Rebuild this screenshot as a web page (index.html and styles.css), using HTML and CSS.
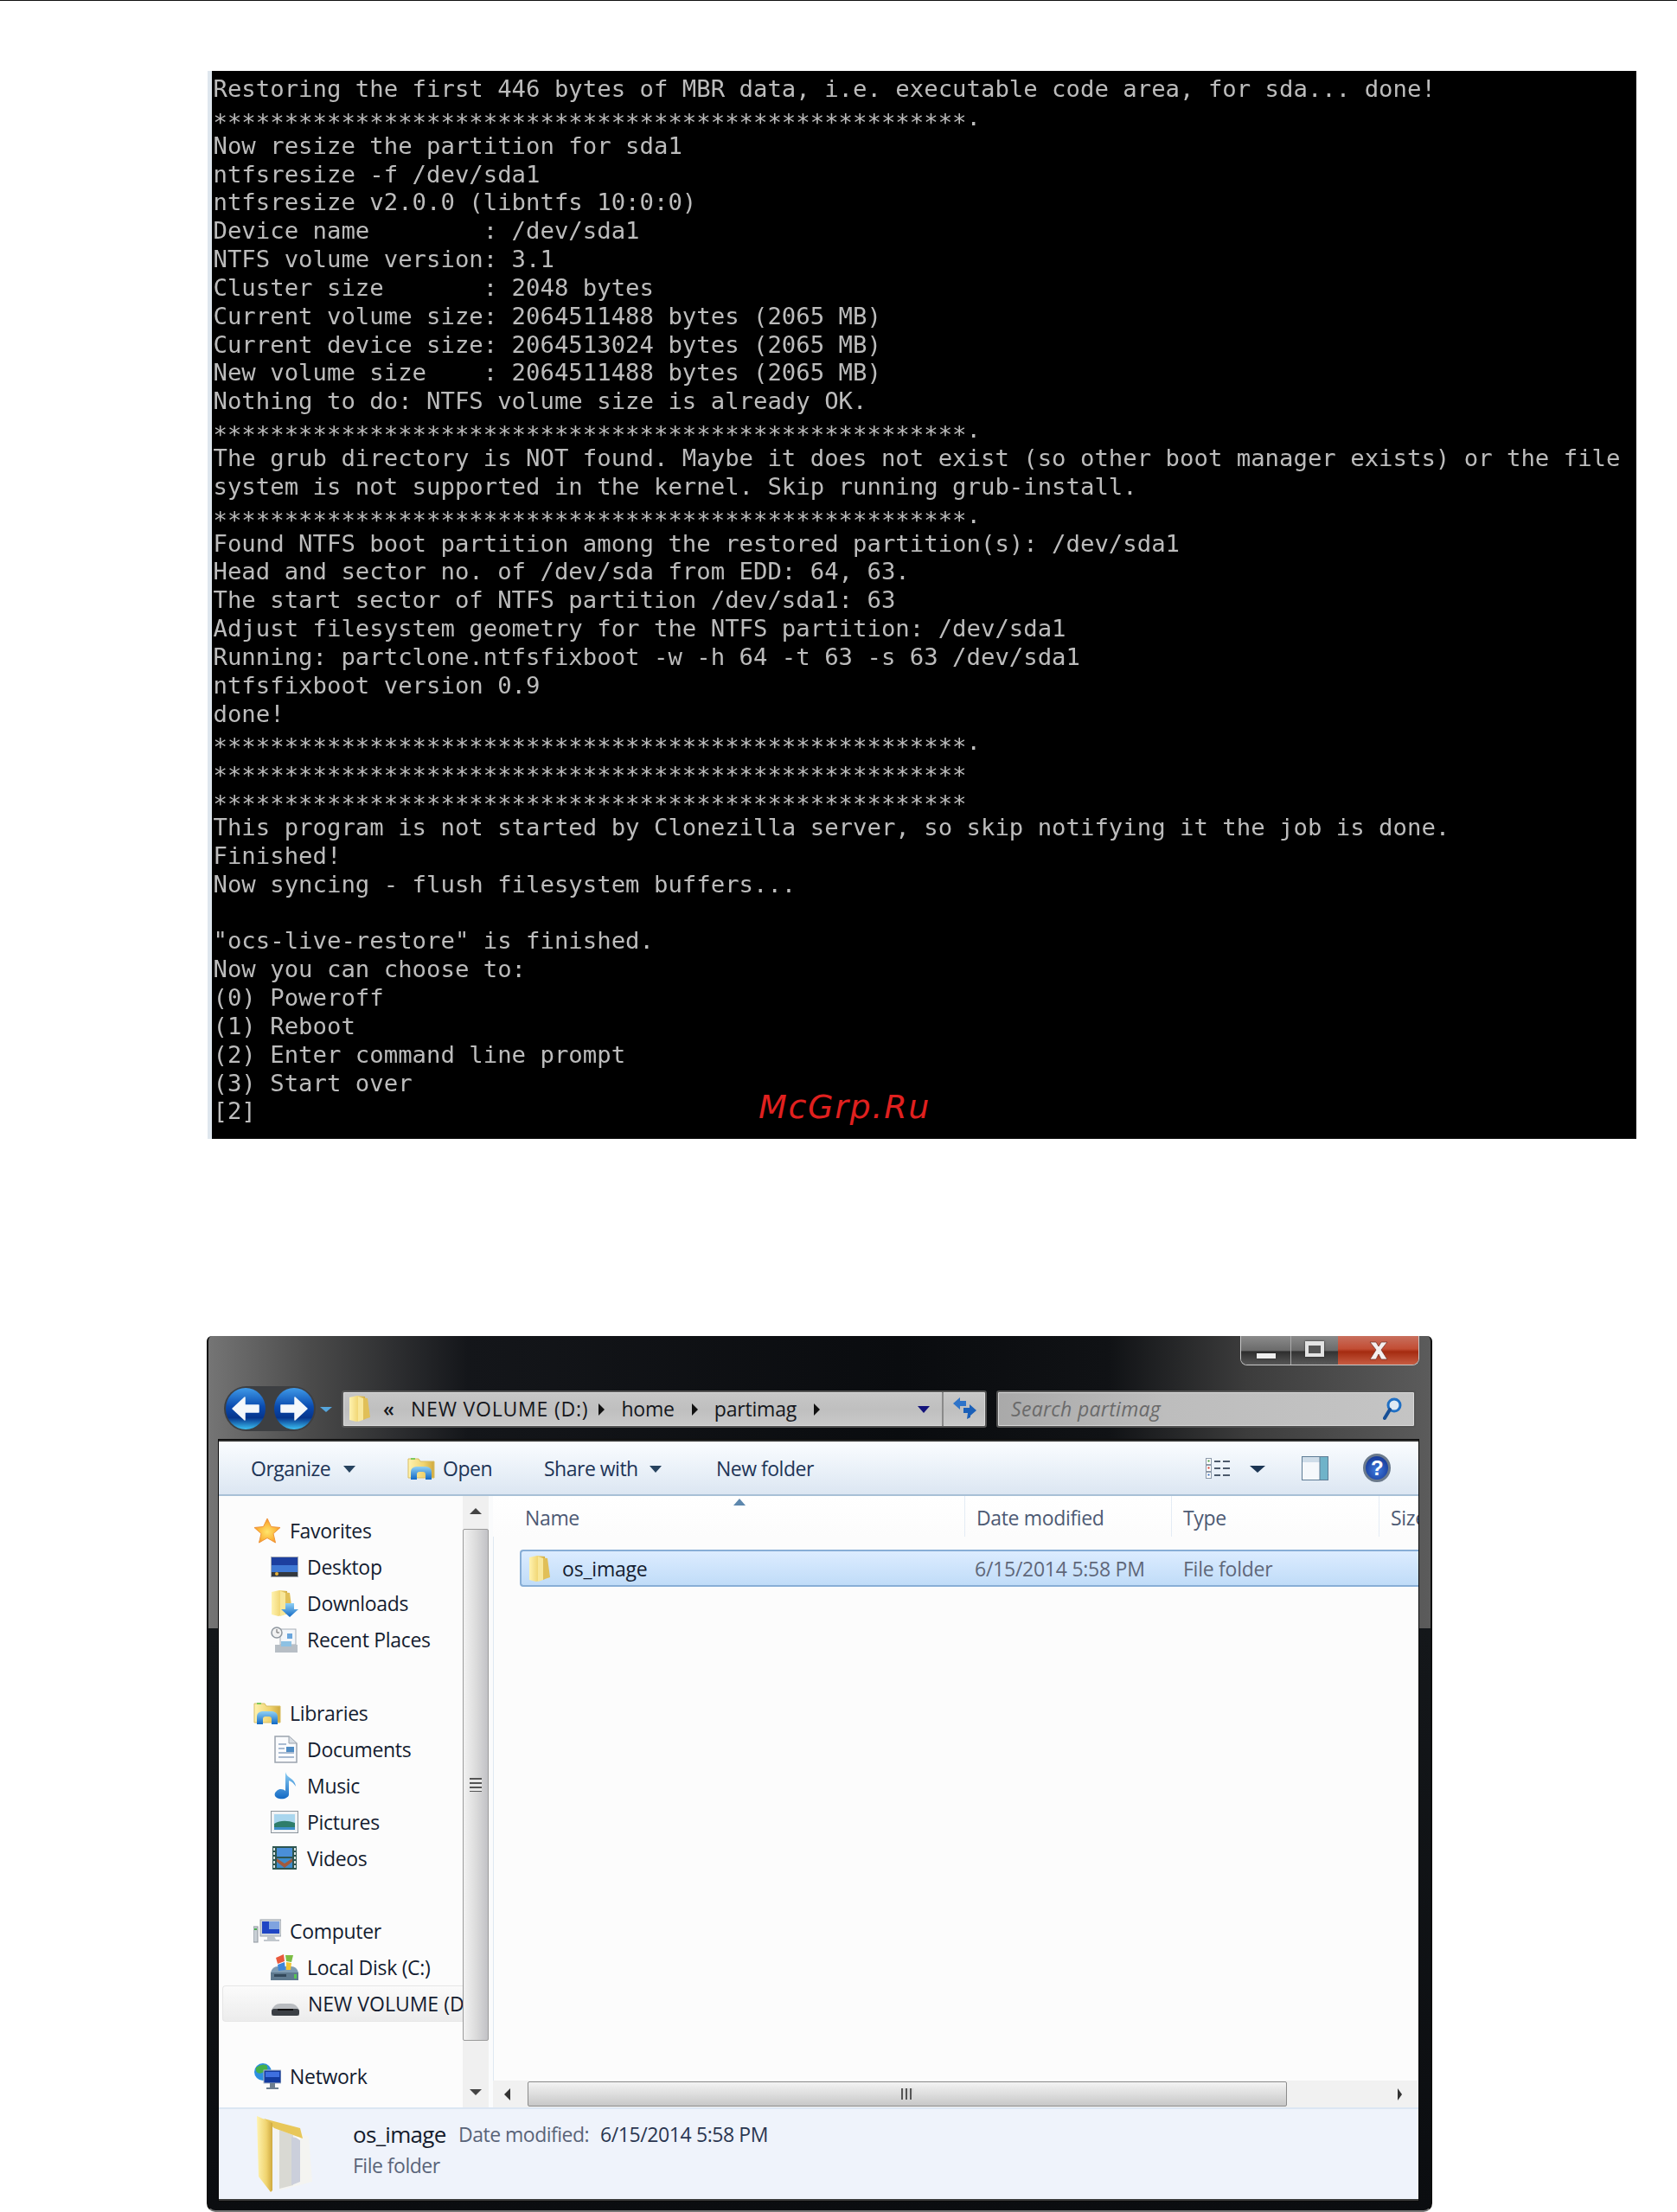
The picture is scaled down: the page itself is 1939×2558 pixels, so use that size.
FILE: index.html
```html
<!DOCTYPE html>
<html lang="en">
<head>
<meta charset="utf-8">
<title>Clonezilla restore</title>
<link rel="stylesheet" href="styles.css">
</head>
<body>
<svg class="defs" aria-hidden="true">
  <defs>
    <linearGradient id="gFolder" x1="0" y1="0" x2="1" y2="0"><stop offset="0" stop-color="#fff3b0"/><stop offset=".6" stop-color="#f0d470"/><stop offset="1" stop-color="#cfa93e"/></linearGradient>
    <linearGradient id="gBlue" x1="0" y1="0" x2="0" y2="1"><stop offset="0" stop-color="#8fd0f5"/><stop offset="1" stop-color="#1269c4"/></linearGradient>
    <radialGradient id="gStar" cx=".5" cy=".55" r=".6"><stop offset="0" stop-color="#ffe56b"/><stop offset=".6" stop-color="#fbb53a"/><stop offset="1" stop-color="#ec7d1e"/></radialGradient>
    <linearGradient id="gNav" x1="0" y1="0" x2="0" y2="1"><stop offset="0" stop-color="#3f9ae8"/><stop offset=".45" stop-color="#0a4bb0"/><stop offset=".72" stop-color="#05348c"/><stop offset="1" stop-color="#3cc0f2"/></linearGradient>
    <symbol id="iFolder" viewBox="0 0 26 32"><path d="M1 3 L10 1 L19 2 L19 28 L9 31 L1 29 Z" fill="url(#gFolder)"/><path d="M13 3 L22 4 L25 26 L16 29 Z" fill="#e0bf58"/><path d="M11 2 L17 4 L17 29 L11 31 Z" fill="#f8e79a"/></symbol>
    <symbol id="iStar" viewBox="0 0 32 30"><path d="M16 1 L20.5 10.5 L31 11.5 L23 18.5 L25.5 29 L16 23.5 L6.500 29 L9 18.500 L1 11.500 L11.500 10.500 Z" fill="url(#gStar)" stroke="#f0953a" stroke-width="1"/></symbol>
    <symbol id="iDesktop" viewBox="0 0 32 24"><rect x="0" y="0" width="32" height="24" fill="#a7adb6"/><rect x="1" y="1" width="30" height="17" fill="#3f78d4"/><rect x="1" y="1" width="30" height="9" fill="#1d3f9f"/><rect x="1" y="18" width="30" height="5" fill="#33383e"/><circle cx="7" cy="20" r="2" fill="#e8b23a"/></symbol>
    <symbol id="iLibrary" viewBox="0 0 32 28"><path d="M1 3 h12 l2 3 h16 v19 H1 Z" fill="url(#gFolder)" stroke="#d8bd62"/><rect x="4" y="2" width="5" height="2" fill="#7fc95c"/><path d="M4 27 v-9 q0-5 6-6 h12 q6 1 6 6 v9 h-7 v-6 q0-3-3-3 h-4 q-3 0-3 3 v6 Z" fill="url(#gBlue)"/></symbol>
  </defs>
</svg>
<main class="page">
  <section class="terminal">
<pre class="term-text">Restoring the first 446 bytes of MBR data, i.e. executable code area, for sda... done!
<span class="stars">*****************************************************</span>.
Now resize the partition for sda1
ntfsresize -f /dev/sda1
ntfsresize v2.0.0 (libntfs 10:0:0)
Device name        : /dev/sda1
NTFS volume version: 3.1
Cluster size       : 2048 bytes
Current volume size: 2064511488 bytes (2065 MB)
Current device size: 2064513024 bytes (2065 MB)
New volume size    : 2064511488 bytes (2065 MB)
Nothing to do: NTFS volume size is already OK.
<span class="stars">*****************************************************</span>.
The grub directory is NOT found. Maybe it does not exist (so other boot manager exists) or the file
system is not supported in the kernel. Skip running grub-install.
<span class="stars">*****************************************************</span>.
Found NTFS boot partition among the restored partition(s): /dev/sda1
Head and sector no. of /dev/sda from EDD: 64, 63.
The start sector of NTFS partition /dev/sda1: 63
Adjust filesystem geometry for the NTFS partition: /dev/sda1
Running: partclone.ntfsfixboot -w -h 64 -t 63 -s 63 /dev/sda1
ntfsfixboot version 0.9
done!
<span class="stars">*****************************************************</span>.
<span class="stars">*****************************************************</span>
<span class="stars">*****************************************************</span>
This program is not started by Clonezilla server, so skip notifying it the job is done.
Finished!
Now syncing - flush filesystem buffers...

"ocs-live-restore" is finished.
Now you can choose to:
(0) Poweroff
(1) Reboot
(2) Enter command line prompt
(3) Start over
[2]</pre>
    <div class="watermark">McGrp.Ru</div>
  </section>

  <section class="window">
    <header class="chrome">
      <div class="caption">
        <div class="winbtns">
          <div class="wb wb-min"><span class="min-bar"></span></div>
          <div class="wb wb-max"><span class="max-box"></span></div>
          <div class="wb wb-close"><svg width="30" height="24" viewBox="0 0 30 24"><path d="M5 2 h7 l3 5 l3-5 h7 l-7 9 l7 11 h-7 l-3-6 l-3 6 h-7 l7-11 Z" fill="#f4efee" stroke="#6b2a20" stroke-width=".7"/></svg></div>
        </div>
      </div>
      <div class="navrow">
        <div class="navbtns">
          <div class="nav-halo">
            <svg class="navbtn" width="46" height="48" viewBox="0 0 46 48"><ellipse cx="23" cy="24" rx="23" ry="24" fill="url(#gNav)"/><path d="M38 20 H22 V11 L8 24 L22 37 V28 H38 Z" fill="#f4f7fb" stroke="#f4f7fb" stroke-width="1.500" stroke-linejoin="round"/></svg>
            <svg class="navbtn" width="46" height="48" viewBox="0 0 46 48"><ellipse cx="23" cy="24" rx="23" ry="24" fill="url(#gNav)"/><path d="M8 20 H24 V11 L38 24 L24 37 V28 H8 Z" fill="#f4f7fb" stroke="#f4f7fb" stroke-width="1.500" stroke-linejoin="round"/></svg>
          </div>
          <span class="tri tri-nav"></span>
        </div>
        <div class="address">
          <div class="crumbs">
            <svg class="addr-folder" width="26" height="32"><use href="#iFolder"/></svg>
            <span class="raquo">«</span>
            <span class="crumb crumb-vol">NEW VOLUME (D:)</span><span class="tri tri-right tri-first"></span>
            <span class="crumb">home</span><span class="tri tri-right"></span>
            <span class="crumb">partimag</span><span class="tri tri-right"></span>
          </div>
          <span class="tri tri-addr"></span>
          <div class="refresh">
            <svg width="29" height="28" viewBox="0 0 29 28"><path d="M1 8 L9 1 V5 H16 V11 H9 V15 Z" fill="#2f74c9"/><path d="M28 16 L20 9 V13 H13 V19 H18 L17 26 L21 24 L21 22 Z" fill="#1a5fb8"/></svg>
          </div>
        </div>
        <div class="search">
          <span class="search-text">Search partimag</span>
          <svg width="22" height="28" viewBox="0 0 22 28"><circle cx="13" cy="10" r="7" fill="#dfe9f3" stroke="#1f6fc4" stroke-width="3"/><path d="M8 15 L2 25" stroke="#174f96" stroke-width="4" stroke-linecap="round"/></svg>
        </div>
      </div>
    </header>

    <div class="panel">
      <div class="toolbar">
        <div class="tb-item tb-organize"><span>Organize</span><span class="tri tri-tool"></span></div>
        <div class="tb-item tb-open">
          <svg width="32" height="28"><use href="#iLibrary"/></svg><span>Open</span>
        </div>
        <div class="tb-item tb-share"><span>Share with</span><span class="tri tri-tool"></span></div>
        <div class="tb-item tb-new"><span>New folder</span></div>
        <div class="tb-right">
          <svg class="tb-views" width="29" height="24" viewBox="0 0 29 24"><g fill="#fff" stroke="#8b98a8"><rect x=".5" y=".5" width="6" height="7"/><rect x=".5" y="8.500" width="6" height="7"/><rect x=".5" y="16.500" width="6" height="7"/></g><rect x="2.500" y="10.500" width="2" height="2" fill="#d23a2a"/><rect x="2.500" y="2.500" width="2" height="2" fill="#4a9a44"/><rect x="2.500" y="18.500" width="2" height="2" fill="#3c72c0"/><path d="M10 4 h7 M20 4 h8 M10 12 h7 M20 12 h8 M10 20 h7 M20 20 h8" stroke="#4c5a6c" stroke-width="2"/></svg>
          <span class="tri tri-views"></span>
          <svg class="tb-pane" width="31" height="28" viewBox="0 0 31 28"><rect x=".5" y=".5" width="30" height="27" fill="#f5f8fb" stroke="#5e7c95"/><rect x="1" y="1" width="20" height="6" fill="#cfdde9"/><rect x="21" y="1" width="9" height="26" fill="#70b3c9"/><path d="M21 1 V27" stroke="#5e7c95"/></svg>
          <div class="tb-help">?</div>
        </div>
      </div>

      <div class="content">
        <nav class="sidebar">
          <div class="tree">
            <div class="node root"><svg class="ic" width="32" height="30"><use href="#iStar"/></svg>Favorites</div>
            <div class="node leaf"><svg class="ic" width="32" height="24"><use href="#iDesktop"/></svg>Desktop</div>
            <div class="node leaf"><svg class="ic" width="32" height="32" viewBox="0 0 32 32"><use href="#iFolder" width="26" height="32"/><path d="M17 16 h10 v7 h5 l-10 9 l-10-9 h5 Z" fill="url(#gBlue)"/></svg>Downloads</div>
            <div class="node leaf"><svg class="ic" width="32" height="31" viewBox="0 0 32 31"><rect x="11" y="3" width="18" height="18" fill="#f4f7fa" stroke="#a6adb5"/><rect x="19" y="8" width="6" height="6" fill="#6aa6dd"/><circle cx="7" cy="7" r="6" fill="#f2f2f2" stroke="#8f979f" stroke-width="1.500"/><path d="M7 3 V7 H10" fill="none" stroke="#666" stroke-width="1"/><path d="M5 21 H31 V30 H5 Z" fill="#b7bec5"/><rect x="12" y="17" width="12" height="6" fill="#8dc1e3"/></svg>Recent Places</div>
            <div class="spacer"></div>
            <div class="node root"><svg class="ic" width="32" height="28"><use href="#iLibrary"/></svg>Libraries</div>
            <div class="node leaf"><svg class="ic" width="32" height="32" viewBox="0 0 32 32"><path d="M5 1 H21 L30 9 V31 H5 Z" fill="#fafbfd" stroke="#9aa3ad" stroke-width="1.500"/><path d="M21 1 V9 H30" fill="#d8dde3" stroke="#9aa3ad"/><path d="M9 10 h9 M9 15 h7 M9 20 h18 M9 25 h18" stroke="#8fa6c4" stroke-width="1.500"/><rect x="18" y="13" width="9" height="6" fill="#4f8cc4"/></svg>Documents</div>
            <div class="node leaf"><svg class="ic" width="32" height="33" viewBox="0 0 32 33"><path d="M17 1 C19 9 28 8 29 18 C26 13 23 12 21 11 L21 27 C21 31 15 33 10 32 C4 31 3 26 7 23 C10 20 15 21 17 23 Z" fill="url(#gBlue)"/></svg>Music</div>
            <div class="node leaf"><svg class="ic" width="32" height="26" viewBox="0 0 32 26"><rect x=".5" y=".5" width="31" height="25" fill="#f1f3f5" stroke="#8d959d"/><rect x="4" y="4" width="24" height="18" fill="#a9d6ee"/><path d="M4 15 Q14 9 28 14 V22 H4 Z" fill="#2e7d6a"/><rect x="4" y="19" width="24" height="3" fill="#3f8fc9"/></svg>Pictures</div>
            <div class="node leaf"><svg class="ic" width="32" height="27" viewBox="0 0 32 27"><rect x="2" width="28" height="27" fill="#2d5550"/><rect x="7" y="2" width="18" height="10" fill="#4a8fd8"/><rect x="7" y="14" width="18" height="11" fill="#3b8ccc"/><path d="M7 14 L16 20 L25 14 V18 L16 25 L7 18 Z" fill="#a25a3c"/><path d="M4 2 V25 M28 2 V25" stroke="#dfe7e6" stroke-width="2" stroke-dasharray="3 2"/></svg>Videos</div>
            <div class="spacer"></div>
            <div class="node root"><svg class="ic" width="32" height="28" viewBox="0 0 32 28"><rect x="8" y="1" width="24" height="19" fill="#cfd5db" stroke="#9aa2aa"/><rect x="10" y="3" width="20" height="14" fill="#1f45c4"/><rect x="18" y="3" width="12" height="9" fill="#7fa3df"/><path d="M16 20 h8 l2 4 h4 v2 h-18 v-2 h4 Z" fill="#c1c7cd"/><rect x="0" y="9" width="5" height="18" fill="#c9cfd5" stroke="#8d959d"/><rect x="1" y="11" width="3" height="2" fill="#4caf50"/></svg>Computer</div>
            <div class="node leaf"><svg class="ic" width="32" height="32" viewBox="0 0 32 32"><path d="M0 22 Q2 15 8 15 H24 Q30 15 32 22 V31 H0 Z" fill="#7f9cb3"/><rect x="0" y="22" width="32" height="9" fill="#5f7a8f"/><rect x="4" y="24" width="14" height="3" fill="#33485a"/><rect x="27" y="24" width="3" height="5" fill="#58c455"/><path d="M6 5 L15 1 L16 9 L8 12 Z" fill="#e9593c"/><path d="M17 2 L26 2 L24 10 L18 9 Z" fill="#7cbd44"/><path d="M8 13 L16 10 L17 19 L9 20 Z" fill="#3e86d8"/><path d="M18 10 L24 11 L23 19 L18 19 Z" fill="#f4c531"/></svg>Local Disk (C:)</div>
            <div class="node leaf sel"><svg class="ic ic-drive" width="32" height="15" viewBox="0 0 32 15"><path d="M0 9 Q3 1 10 1 H22 Q29 1 32 9 V15 H0 Z" fill="#b9bcc0"/><rect x="0" y="7" width="32" height="8" rx="3" fill="#3b3f44"/><rect x="7" y="7" width="18" height="2" fill="#111"/></svg>NEW VOLUME (D:)</div>
            <div class="spacer"></div>
            <div class="node root"><svg class="ic" width="32" height="32" viewBox="0 0 32 32"><circle cx="11" cy="11" r="10" fill="#2d8fe0"/><path d="M3 6 Q9 1 15 3 Q19 8 12 11 Q6 15 3 10 Z" fill="#46b04a"/><rect x="12" y="9" width="20" height="15" fill="#123a9f" stroke="#aeb8c4"/><rect x="14" y="11" width="16" height="6" fill="#3e6fe0"/><path d="M19 24 h6 v5 h4 v2 h-14 v-2 h4 Z" fill="#6d7e8f"/></svg>Network</div>
          </div>
          <div class="vscroll">
            <div class="sb-btn"><span class="tri tri-up"></span></div>
            <div class="v-thumb"><span class="grip-h"></span></div>
            <div class="v-rest"><span class="tri tri-down"></span></div>
          </div>
        </nav>

        <div class="main">
          <span class="sort-caret"></span>
          <div class="col-head">
            <div class="hc hc-name">Name</div>
            <div class="hc">Date modified</div>
            <div class="hc">Type</div>
            <div class="hc">Size</div>
          </div>
          <div class="listing">
            <div class="file-row">
              <div class="fname"><svg width="26" height="32"><use href="#iFolder"/></svg><span>os_image</span></div>
              <div class="fdate">6/15/2014 5:58 PM</div>
              <div class="ftype">File folder</div>
            </div>
          </div>
          <div class="hscroll">
            <span class="tri tri-left"></span>
            <div class="h-thumb"><span class="grip-v"></span></div>
            <span class="tri tri-right-s"></span>
          </div>
        </div>
      </div>

      <footer class="details">
        <svg class="big-folder" width="64" height="88" viewBox="0 0 64 88"><path d="M18 10 L60 24 L64 76 L26 86 Z" fill="#f4f4f1"/><path d="M26 16 L42 22 L42 80 L26 84 Z" fill="#d9d9d3"/><path d="M40 24 L50 26 L50 76 L40 80 Z" fill="#cbcfdb"/><path d="M44 24 L50 25 L50 28 Z" fill="#fff"/><path d="M8 3 L50 14 L53 26 L20 14 Z" fill="#e8c759"/><path d="M0 0 L18 8 L18 86 L16 88 L2 70 Z" fill="url(#gFolder)"/></svg>
        <div class="det-text">
          <div class="det-top"><span class="det-name">os_image</span><span class="det-label">Date modified:</span><span class="det-val">6/15/2014 5:58 PM</span></div>
          <div class="det-type">File folder</div>
        </div>
      </footer>
    </div>
  </section>
</main>
</body>
</html>
```
FILE: styles.css
```css
* { box-sizing: border-box; }
html, body { margin: 0; padding: 0; background: #fff; }
body { width: 1939px; height: 2558px; overflow: hidden; font-family: "Open Sans", "Noto Sans", sans-serif; }
.defs { display: block; width: 0; height: 0; }
.page { border-top: 1px solid #111; height: 2558px; padding-top: 81px; }

/* terminal */
.terminal { position: relative; margin-left: 240px; width: 1652px; height: 1235px; background: #000; border-left: 5px solid #dfe7ee; padding: 2px 0 0 1.500px; overflow: hidden; }
.term-text { margin: 0; padding-top: 3px; font-family: "DejaVu Sans Mono", "Liberation Mono", monospace; font-size: 27.300px; line-height: 32.850px; color: #bcbcbc; white-space: pre; filter: blur(.45px); }
.stars { vertical-align: -6px; line-height: 0; }
.watermark { position: absolute; left: 632px; top: 1176px; font-family: "DejaVu Sans", sans-serif; font-style: italic; font-size: 38px; letter-spacing: 1.700px; color: #e0201f; line-height: 44px; }

/* window */
.window { margin: 228px 0 0 239px; width: 1417px; height: 1013px; padding: 0 14px 11px 12px; display: flex; flex-direction: column; border-radius: 6px 6px 10px 10px; border: 2px solid #0d0d0d; border-top: 0; border-bottom-color: #777;
  background:
    linear-gradient(180deg, #0000 0, #0000 338px, #14171a 338px, #0b0d10 100%),
    linear-gradient(90deg, #757575 0, #4a4a4a 120px, #14161a 300px, #0a0c0f 800px, #101215 1040px, #3c3c3c 1200px, #5c5c5c 1417px); }
.chrome { height: 120px; flex: none; display: flex; flex-direction: column; }
.caption { display: flex; justify-content: flex-end; height: 34px; flex: none; }
.winbtns { display: flex; width: 207px; height: 34px; margin-right: -1px; border: 1px solid #c9c9c9; border-top: 0; border-radius: 0 0 8px 8px; overflow: hidden; }
.wb { display: flex; align-items: center; justify-content: center; height: 100%; }
.wb-min { width: 58px; background: linear-gradient(180deg, #8b8b8b, #6b6b6b 50%, #2e2e2e 55%, #565656); border-right: 1px solid #aaa; }
.wb-max { width: 54px; background: linear-gradient(180deg, #8b8b8b, #6b6b6b 50%, #333 55%, #5a5a5a); }
.wb-close { flex: 1; background: linear-gradient(180deg, #c8705e, #c24d34 45%, #a52b10 55%, #c65c42); }
.min-bar { width: 22px; height: 6px; margin-top: 12px; background: #eee; box-shadow: 0 0 2px #222; }
.max-box { width: 22px; height: 18px; margin-top: -4px; border: 4px solid #e3e3e3; border-top-width: 5px; background: #555; box-shadow: 0 0 2px #222; }
.navrow { display: flex; align-items: center; margin-top: 26px; height: 48px; padding-left: 8px; }
.navbtns { display: flex; align-items: center; width: 134px; flex: none; }
.nav-halo { display: flex; gap: 10px; border-radius: 26px; background: #3d3f42; box-shadow: 0 0 0 2px #3d3f42; }
.navbtn { flex: none; display: block; }
.tri { display: inline-block; width: 0; height: 0; flex: none; border-style: solid; border-color: transparent; }
.tri-nav { margin-left: 7px; margin-top: 2px; border-width: 6px 7px 0; border-top-color: #55a5dc; }
.address { width: 746px; height: 43px; flex: none; display: flex; align-items: center; border: 2px solid #545454; border-radius: 3px; background: linear-gradient(180deg, #c7c7c7, #bfbfbf 50%, #c9c9c9); font-size: 23px; color: #15171c; box-shadow: inset 0 0 0 1px #dcdcdc; }
.crumbs { display: flex; align-items: center; flex: 1; padding-left: 6px; white-space: nowrap; letter-spacing: -.2px; }
.addr-folder { flex: none; margin-right: 14px; }
.raquo { width: 32px; font-weight: 600; }
.crumb { display: block; }
.crumb-vol { letter-spacing: .8px; }
.tri-right { margin: 2px 0 0 0; border-width: 7px 0 7px 7px; border-left-color: #111; }
.crumb + .tri-right { margin-left: 20px; margin-right: 19px; }
.crumb + .tri-first { margin-left: 12px; }
.tri-addr { margin-right: 14px; margin-top: 2px; border-width: 8px 7px 0; border-top-color: #12127a; }
.refresh { width: 50px; height: 100%; display: flex; align-items: center; justify-content: center; border-left: 2px solid #8a8a8a; }
.search { width: 485px; height: 43px; margin-left: 11px; flex: none; display: flex; align-items: center; justify-content: space-between; padding: 0 14px 0 15px; border: 2px solid #545454; border-radius: 3px; background: linear-gradient(90deg, #a9a9a9, #bdbdbd 40%, #c4c4c4); box-shadow: inset 0 0 0 1px #d8d8d8; }
.search-text { font-style: italic; font-size: 23px; color: #6a6a6a; letter-spacing: .3px; }

/* panel */
.panel { flex: 1; display: flex; flex-direction: column; min-height: 0; background: #fcfcfc; border-top: 2px solid #2c2c2c; box-shadow: 0 0 0 1px #0a0a0a; color: #1c2740; font-size: 23px; letter-spacing: -.5px; }
.toolbar { height: 63px; flex: none; display: flex; align-items: center; padding-left: 37px; background: linear-gradient(180deg, #fafcff, #eef4fa 40%, #dce6f2); border-bottom: 2px solid #a8c0d6; color: #1e3557; }
.tb-item { display: flex; align-items: center; white-space: nowrap; }
.tb-organize { width: 181px; gap: 15px; }
.tb-open { width: 158px; gap: 9px; }
.tb-share { width: 199px; gap: 13px; }
.tb-new { width: 115px; }
.tri-tool { margin-top: 2px; border-width: 8px 7px 0; border-top-color: #27435f; }
.tb-right { display: flex; align-items: center; margin-left: auto; padding-right: 32px; }
.tb-views { flex: none; }
.tri-views { margin: 2px 0 0 22px; border-width: 8px 9px 0; border-top-color: #1c3654; }
.tb-pane { flex: none; margin-left: 42px; }
.tb-help { width: 32px; height: 33px; margin-left: 40px; border-radius: 50%; display: flex; align-items: center; justify-content: center; color: #fff; font-family: "Liberation Sans", sans-serif; font-weight: 700; font-size: 24px; background: radial-gradient(circle at 50% 60%, #3f7ce0, #1a3f9e 70%); border: 3px solid #6b7a8c; }

.content { flex: 1; display: flex; min-height: 0; }
.sidebar { width: 317px; flex: none; display: flex; }
.tree { width: 282px; flex: none; padding-top: 19px; overflow: hidden; color: #141c30; letter-spacing: -.3px; }
.node { height: 42.100px; display: flex; align-items: center; white-space: nowrap; position: relative; }
.spacer { height: 42.100px; }
.root { padding-left: 40px; gap: 10px; }
.leaf { padding-left: 60px; gap: 10px; }
.ic { flex: none; }
.sel { margin-left: 4px; padding-left: 56px; height: 42px; border: 1px solid #e6e6e6; border-right: 0; border-radius: 4px 0 0 4px; background: linear-gradient(180deg, #fbfbfb, #ececec); letter-spacing: 0; }
.ic-drive { margin-top: 12px; }

.vscroll { width: 35px; flex: none; display: flex; flex-direction: column; background: #f0f0f0; border-right: 5px solid #fafbfc; box-shadow: 1px 0 0 #dfe8f2; }
.sb-btn { height: 38px; flex: none; display: flex; justify-content: center; padding-top: 14px; }
.tri-up { border-width: 0 7px 7px; border-bottom-color: #444; }
.tri-down { border-width: 7px 7px 0; border-top-color: #444; }
.v-thumb { height: 592px; flex: none; display: flex; align-items: center; justify-content: center; margin-right: 0; width: 30px; border: 1px solid #9b9b9b; border-radius: 2px; background: linear-gradient(90deg, #f2f2f2, #dcdcdc 50%, #c2c2c6); }
.grip-h { width: 14px; height: 16px; background: repeating-linear-gradient(180deg, #555 0 2px, #e8e8e8 2px 5px); }
.v-rest { flex: 1; display: flex; justify-content: center; padding-top: 56px; }

.main { flex: 1; min-width: 0; display: flex; flex-direction: column; position: relative; color: #5b6478; }
.sort-caret { position: absolute; left: 278px; top: 3px; width: 0; height: 0; border-style: solid; border-width: 0 7px 8px; border-color: transparent transparent #5d87ad; }
.col-head { display: grid; grid-template-columns: 546px 239px 240px 1fr; height: 47px; flex: none; overflow: hidden; color: #4d5a74; letter-spacing: -.35px; background: linear-gradient(180deg, #fff, #fcfcfc); }
.hc { padding-left: 13px; border-right: 1px solid #e4ecf5; line-height: 51px; white-space: nowrap; }
.hc-name { padding-left: 37px; }
.listing { flex: 1; padding-top: 15px; overflow: hidden; }
.file-row { display: grid; height: 43px; margin-left: 31px; grid-template-columns: 524px 241px 1fr; align-items: center; border: 2px solid #88aed6; border-right: 0; border-radius: 4px 0 0 4px; letter-spacing: -.25px; background: linear-gradient(180deg, #dcecff, #c0dcf8); }
.fname { display: flex; align-items: center; gap: 13px; padding-left: 8px; color: #141c30; }
.fname span { letter-spacing: -.2px; }
.fdate { color: #5f6779; }
.ftype { padding-left: 0; color: #5f6779; }
.hscroll { height: 31px; flex: none; display: flex; align-items: center; background: #f1f1f1; padding-left: 13px; }
.tri-left { border-width: 7px 7px 7px 0; border-right-color: #333; }
.h-thumb { width: 878px; height: 29px; margin-left: 20px; display: flex; align-items: center; justify-content: center; border: 1px solid #8c8c8c; border-radius: 2px; background: linear-gradient(180deg, #f3f3f3, #e0e0e0 45%, #c7c7c7); }
.grip-v { width: 14px; height: 13px; background: repeating-linear-gradient(90deg, #555 0 2px, #d8d8d8 2px 5px); }
.tri-right-s { margin-left: 128px; border-width: 7px 0 7px 5px; border-left-color: #333; }

.details { height: 108px; flex: none; display: flex; padding: 8px 0 0 44px; background: #eff3fb; border-top: 2px solid #dbe6f3; border-bottom: 2px solid #3a3a3a; }
.big-folder { flex: none; }
.det-text { margin-left: 47px; padding-top: 3px; }
.det-top { display: flex; align-items: center; white-space: nowrap; height: 36px; }
.det-name { font-size: 26px; letter-spacing: -.7px; color: #151b2c; width: 122px; }
.det-label { color: #5a6479; width: 164px; }
.det-val { color: #2a3650; letter-spacing: -.4px; }
.det-type { color: #5a6479; margin-top: 2px; }
```
